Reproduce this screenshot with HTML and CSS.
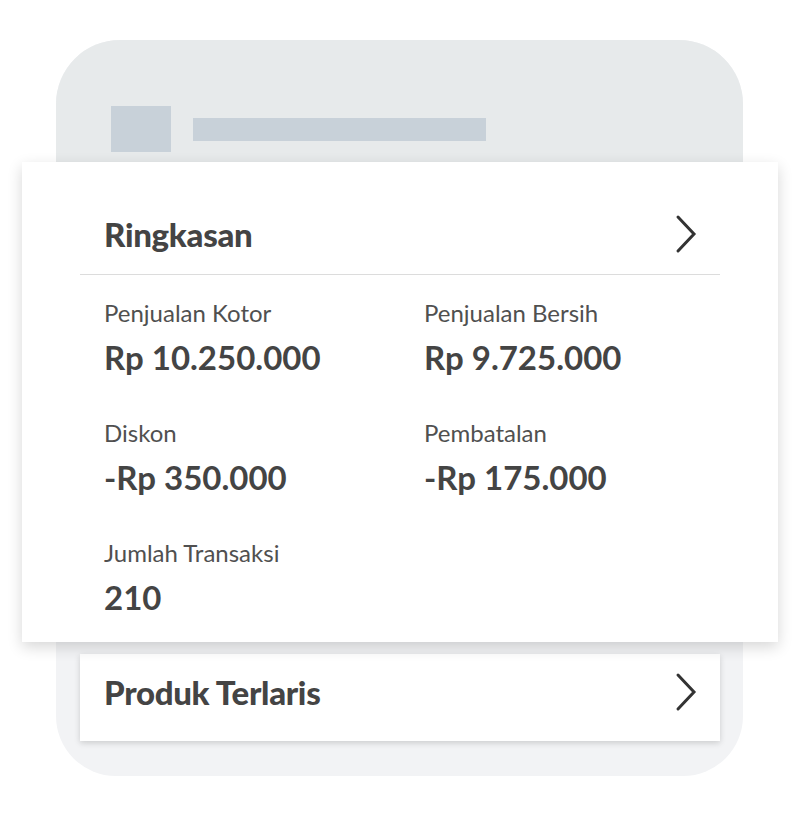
FILE: index.html
```html
<!DOCTYPE html>
<html lang="id">
<head>
<meta charset="utf-8">
<title>Ringkasan</title>
<link rel="stylesheet" href="styles.css">
</head>
<body>
<div class="phone">
  <div class="phone-head">
    <div class="ph-square"></div>
    <div class="ph-bar"></div>
  </div>
  <div class="card summary">
    <div class="card-inner">
      <div class="row-head">
        <h2 class="title">Ringkasan</h2>
        <svg class="chev" viewBox="0 0 22 40" width="22" height="40"><path d="M3 3 L19 20 L3 37" fill="none" stroke="#333" stroke-width="3" stroke-linecap="round" stroke-linejoin="miter"/></svg>
      </div>
      <div class="stats">
        <div class="stat"><div class="label">Penjualan Kotor</div><div class="value">Rp 10.250.000</div></div>
        <div class="stat"><div class="label">Penjualan Bersih</div><div class="value">Rp 9.725.000</div></div>
        <div class="stat"><div class="label">Diskon</div><div class="value">-Rp 350.000</div></div>
        <div class="stat"><div class="label">Pembatalan</div><div class="value">-Rp 175.000</div></div>
        <div class="stat"><div class="label">Jumlah Transaksi</div><div class="value">210</div></div>
      </div>
    </div>
  </div>
  <div class="card best">
    <h2 class="title">Produk Terlaris</h2>
    <svg class="chev" viewBox="0 0 22 40" width="22" height="40"><path d="M3 3 L19 20 L3 37" fill="none" stroke="#333" stroke-width="3" stroke-linecap="round" stroke-linejoin="miter"/></svg>
  </div>
</div>
</body>
</html>
```
FILE: styles.css
```css
html, body {
  margin: 0;
  padding: 0;
  background: #ffffff;
}
body {
  font-family: Lato, "Open Sans", "Liberation Sans", sans-serif;
  color: #474747;
  padding-top: 40px;
}
.phone {
  margin-left: 56px;
  width: 687px;
  height: 736px;
  background: #f2f3f5;
  border-radius: 64px 64px 60px 60px;
  display: flex;
  flex-direction: column;
}
.phone-head {
  height: 128px;
  background: #e7eaeb;
  border-radius: 64px 64px 0 0;
  display: flex;
  align-items: center;
  padding-left: 55px;
  padding-top: 50px;
  gap: 22px;
  box-sizing: border-box;
  flex-shrink: 0;
}
.ph-square {
  width: 60px;
  height: 46px;
  background: #c8d1d9;
}
.ph-bar {
  width: 293px;
  height: 23px;
  background: #c8d1d9;
}
.card {
  background: #ffffff;
  box-sizing: border-box;
  flex-shrink: 0;
}
.summary {
  margin-left: -34px;
  margin-top: -6px;
  width: 756px;
  height: 480px;
  padding: 0 58px;
  box-shadow: 0 5px 14px rgba(0, 0, 0, 0.16);
  position: relative;
  z-index: 1;
}
.row-head {
  height: 113px;
  padding: 32px 23px 0 24px;
  box-sizing: border-box;
  display: flex;
  align-items: center;
  justify-content: space-between;
  border-bottom: 1px solid #dcdcdc;
}
.title {
  margin: 0;
  font-size: 33px;
  font-weight: 900;
  line-height: 40px;
  color: #444444;
  letter-spacing: -0.3px;
}
.chev {
  display: block;
}
.stats {
  display: grid;
  grid-template-columns: 320px 320px;
  row-gap: 41px;
  padding: 23px 0 0 24px;
}
.label {
  font-size: 24px;
  font-weight: 400;
  line-height: 30px;
  color: #505050;
}
.value {
  margin-top: 9px;
  font-size: 33px;
  font-weight: 700;
  line-height: 40px;
  color: #444444;
}
.best {
  margin-left: 24px;
  margin-top: 12px;
  width: 640px;
  height: 87px;
  padding: 0 23px 12px 24px;
  display: flex;
  align-items: center;
  justify-content: space-between;
  box-shadow: 0 2px 6px rgba(0, 0, 0, 0.16);
}
```
